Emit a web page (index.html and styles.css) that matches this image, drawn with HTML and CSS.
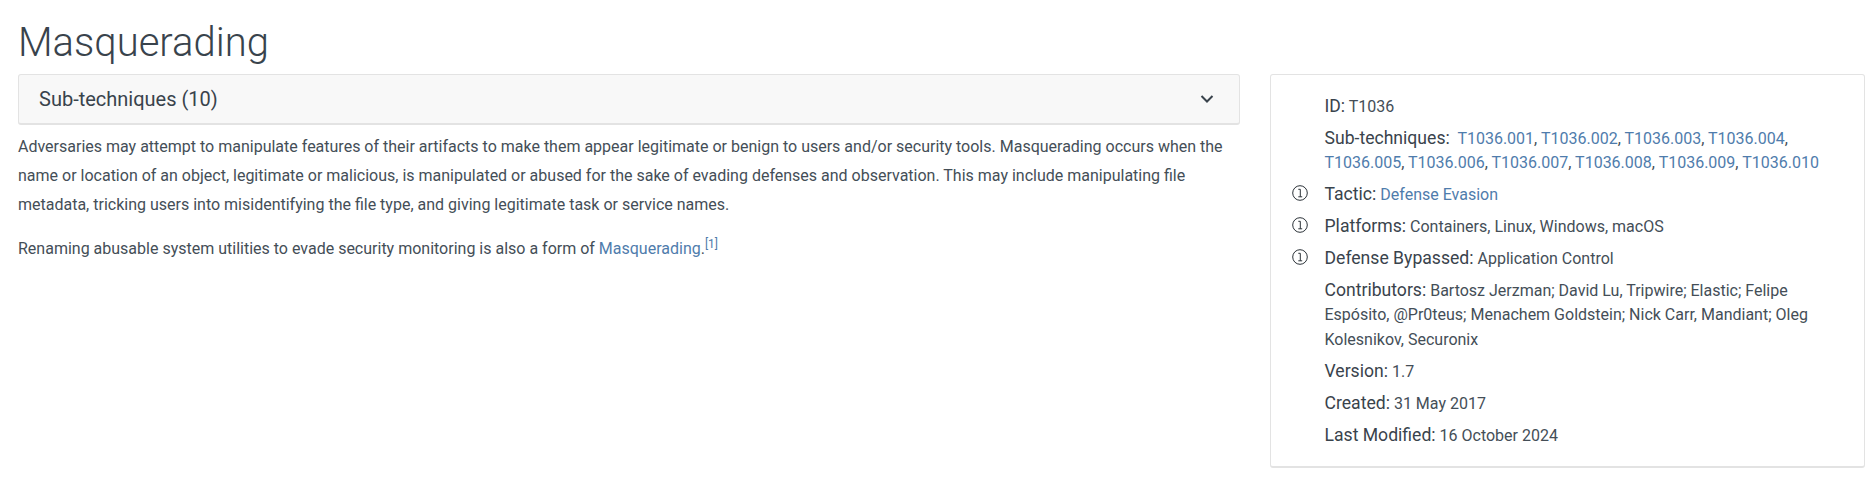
FILE: index.html
```html
<!DOCTYPE html>
<html lang="en">
<head>
<meta charset="utf-8">
<title>Masquerading</title>
<link rel="stylesheet" href="styles.css">
</head>
<body>
<h1 class="title">Masquerading</h1>
<div class="layout">
  <main class="main">
    <div class="accordion">
      <span class="accordion-label">Sub-techniques (10)</span>
      <svg class="chevron" width="14" height="10" viewBox="0 0 14 10"><path d="M1.5 2 L7 7.5 L12.5 2" fill="none" stroke="#39434c" stroke-width="2"/></svg>
    </div>
    <div class="description">
      <p>Adversaries may attempt to manipulate features of their artifacts to make them appear legitimate or benign to users and/or security tools. Masquerading occurs when the name or location of an object, legitimate or malicious, is manipulated or abused for the sake of evading defenses and observation. This may include manipulating file metadata, tricking users into misidentifying the file type, and giving legitimate task or service names.</p>
      <p>Renaming abusable system utilities to evade security monitoring is also a form of <a href="#">Masquerading</a>.<sup class="ref"><a href="#">[1]</a></sup></p>
    </div>
  </main>
  <aside class="card">
    <div class="row"><span class="key">ID:</span> T1036</div>
    <div class="row"><span class="key">Sub-techniques:</span>&nbsp; <a href="#">T1036.001</a>, <a href="#">T1036.002</a>, <a href="#">T1036.003</a>, <a href="#">T1036.004</a>, <a href="#">T1036.005</a>, <a href="#">T1036.006</a>, <a href="#">T1036.007</a>, <a href="#">T1036.008</a>, <a href="#">T1036.009</a>, <a href="#">T1036.010</a></div>
    <div class="row"><svg class="info" width="16" height="16" viewBox="0 0 16 16"><circle cx="8" cy="8" r="7.3" fill="none" stroke="#2b3238"/><path d="M6.3 4.3H8.3V11.8M6.3 11.8H10.2" fill="none" stroke="#2b3238"/></svg><span class="key">Tactic:</span> <a href="#">Defense Evasion</a></div>
    <div class="row"><svg class="info" width="16" height="16" viewBox="0 0 16 16"><circle cx="8" cy="8" r="7.3" fill="none" stroke="#2b3238"/><path d="M6.3 4.3H8.3V11.8M6.3 11.8H10.2" fill="none" stroke="#2b3238"/></svg><span class="key">Platforms:</span> Containers, Linux, Windows, macOS</div>
    <div class="row"><svg class="info" width="16" height="16" viewBox="0 0 16 16"><circle cx="8" cy="8" r="7.3" fill="none" stroke="#2b3238"/><path d="M6.3 4.3H8.3V11.8M6.3 11.8H10.2" fill="none" stroke="#2b3238"/></svg><span class="key">Defense Bypassed:</span> Application Control</div>
    <div class="row"><span class="key">Contributors:</span> Bartosz Jerzman; David Lu, Tripwire; Elastic; Felipe Espósito, @Pr0teus; Menachem Goldstein; Nick Carr, Mandiant; Oleg Kolesnikov, Securonix</div>
    <div class="row"><span class="key">Version:</span> 1.7</div>
    <div class="row"><span class="key">Created:</span> 31 May 2017</div>
    <div class="row"><span class="key">Last Modified:</span> 16 October 2024</div>
  </aside>
</div>
</body>
</html>
```
FILE: styles.css
```css
* { box-sizing: border-box; }
html, body { margin: 0; padding: 0; background: #fff; }
body {
  font-family: Roboto, "Liberation Sans", sans-serif;
  font-size: 16px;
  color: #39434c;
  overflow: hidden;
}
a { color: #4f7cac; text-decoration: none; }
.title {
  margin: 0;
  padding: 19px 18px 0;
  height: 74px;
  font-size: 40px;
  font-weight: 300;
  line-height: 48px;
}
.layout {
  display: flex;
  align-items: flex-start;
  padding-left: 18px;
}
.main { width: 1222px; flex: none; }
.accordion {
  display: flex;
  justify-content: space-between;
  align-items: center;
  height: 51px;
  padding: 0 25px 0 20px;
  background: #f8f8f8;
  border: 1px solid #e3e3e3;
  border-bottom-width: 2px;
  border-radius: 3px;
}
.accordion-label { font-size: 20px; line-height: 24px; }
.chevron { display: block; }
.description { padding-top: 7px; line-height: 29px; color: #444e57; }
.description p { margin: 0 0 15px; }
.ref { font-size: 12px; line-height: 0; vertical-align: baseline; position: relative; top: -6px; }
.card {
  flex: none;
  width: 595px;
  margin-left: 30px;
  height: 394px;
  padding: 19px 16px 0 53.5px;
  border: 1px solid #e3e3e3;
  border-bottom-width: 2px;
  border-radius: 3px;
  background: #fff;
  line-height: 24.2px;
  color: #444e57;
}
.row { position: relative; margin-bottom: 6.8px; }
.key { font-size: 17.6px; color: #39434c; }
.info { position: absolute; left: -32.5px; top: 3px; }
```
